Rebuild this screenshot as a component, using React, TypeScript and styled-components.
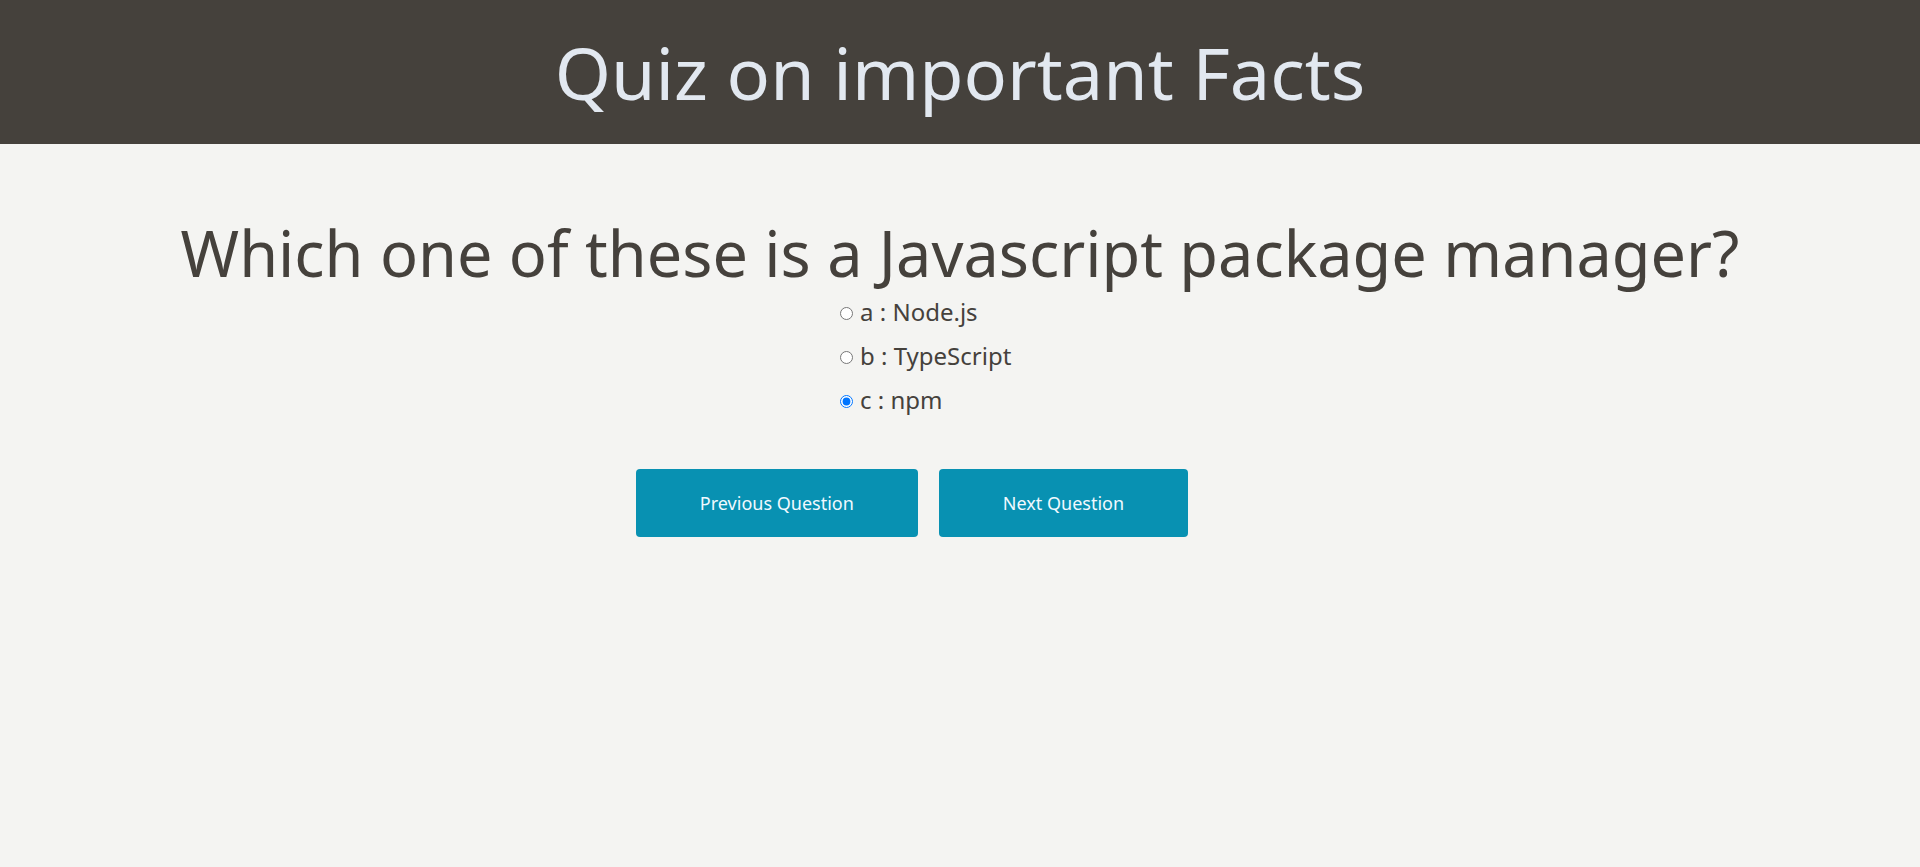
import React, { useState } from "react";
import styled, { createGlobalStyle } from "styled-components";

const GlobalStyle = createGlobalStyle`
  html, body {
    margin: 0;
    padding: 0;
    background: #f4f4f2;
    font-family: "Noto Sans", "Open Sans", sans-serif;
  }
`;

const Page = styled.div`
  min-height: 867px;
  background: #f4f4f2;
  display: flex;
  flex-direction: column;
`;

const Header = styled.header`
  height: 144px;
  background: #45413c;
  display: flex;
  align-items: center;
  justify-content: center;
`;

const Title = styled.h1`
  margin: 0;
  font-size: 72px;
  font-weight: 400;
  line-height: 98px;
  color: #e2e8f0;
`;

const Main = styled.main`
  display: flex;
  flex-direction: column;
  align-items: center;
  padding-top: 66px;
`;

const Question = styled.h2`
  margin: 0;
  font-size: 63px;
  font-weight: 400;
  line-height: 86px;
  letter-spacing: 0;
  color: #45413c;
`;

const Options = styled.div`
  width: 240px;
  display: flex;
  flex-direction: column;
  gap: 11.5px;
  padding-right: 2px;
`;

const OptionLabel = styled.label`
  display: flex;
  align-items: center;
  font-size: 24px;
  line-height: 32.5px;
  color: #45413c;
  cursor: pointer;
`;

const Radio = styled.input`
  width: 13px;
  height: 13px;
  margin: 2px 7px 0 1px;
`;

const Buttons = styled.div`
  display: flex;
  gap: 21px;
  margin-top: 52px;
  padding-right: 96px;
`;

const Button = styled.button`
  height: 68px;
  padding: 0 64px;
  border: none;
  border-radius: 4px;
  background: #0891b2;
  color: #f0f9ff;
  font-family: "Noto Sans", "Open Sans", sans-serif;
  font-size: 18px;
  cursor: pointer;
`;

const options = [
  { key: "a", text: "Node.js" },
  { key: "b", text: "TypeScript" },
  { key: "c", text: "npm" },
];

export default function App() {
  const [selected, setSelected] = useState("c");
  return (
    <>
      <GlobalStyle />
      <Page>
        <Header>
          <Title>Quiz on important Facts</Title>
        </Header>
        <Main>
          <Question>Which one of these is a Javascript package manager?</Question>
          <Options>
            {options.map((o) => (
              <OptionLabel key={o.key}>
                <Radio
                  type="radio"
                  name="answer"
                  checked={selected === o.key}
                  onChange={() => setSelected(o.key)}
                />
                {o.key} : {o.text}
              </OptionLabel>
            ))}
          </Options>
          <Buttons>
            <Button>Previous Question</Button>
            <Button>Next Question</Button>
          </Buttons>
        </Main>
      </Page>
    </>
  );
}
